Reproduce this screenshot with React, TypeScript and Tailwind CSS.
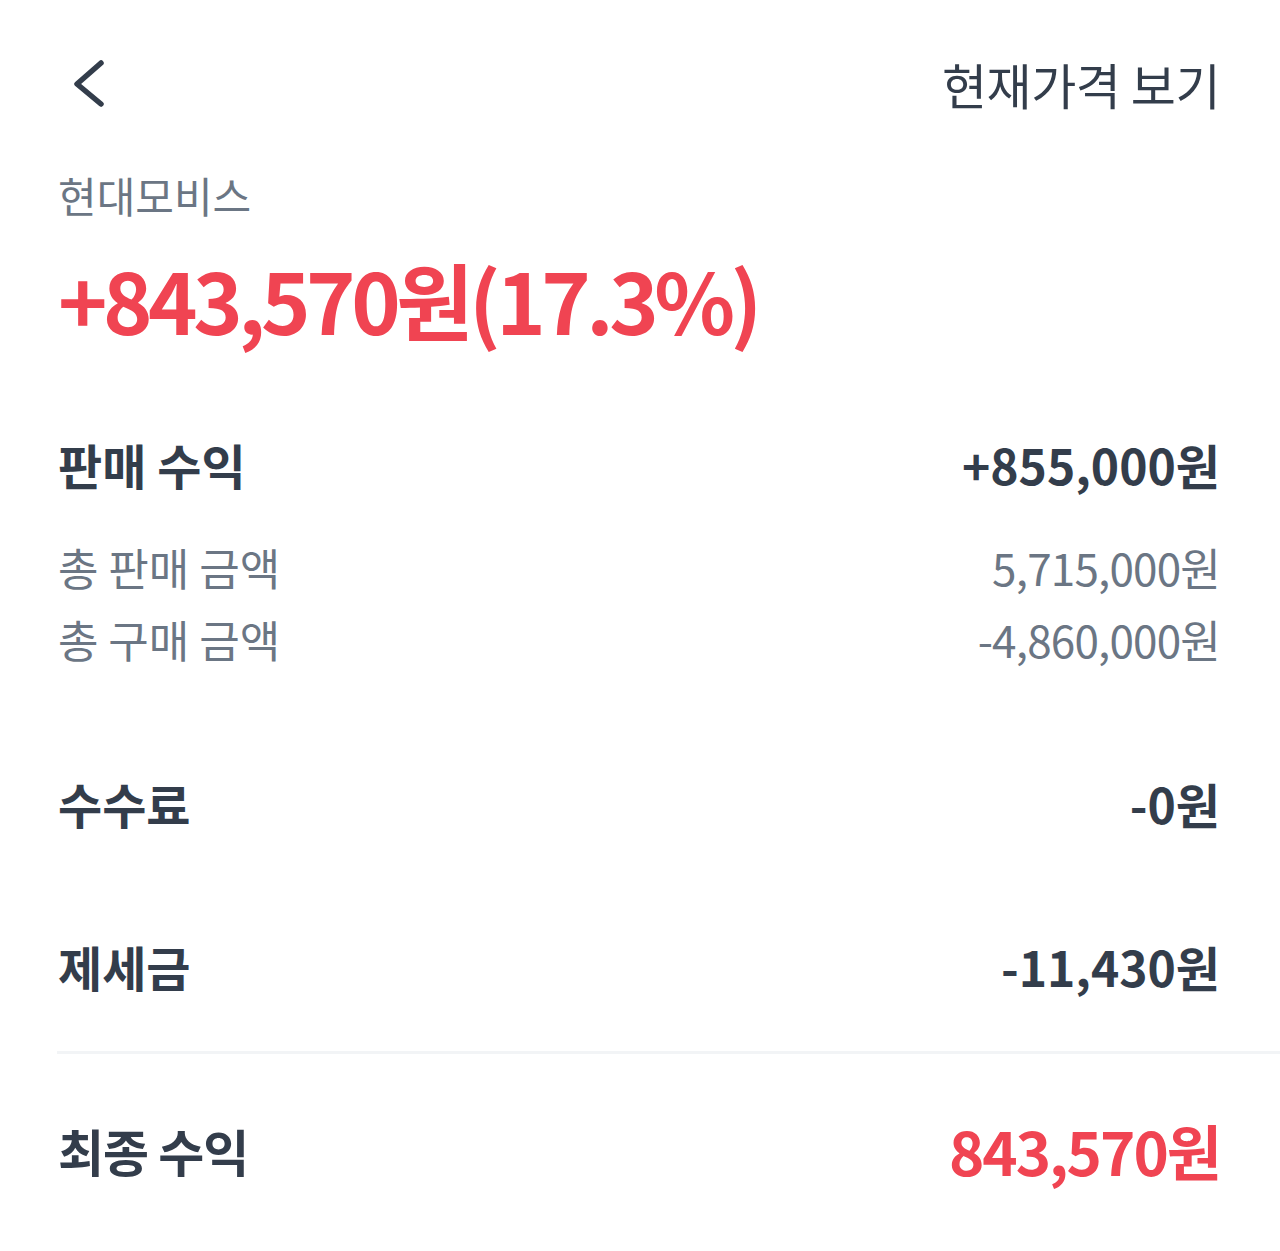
import { type FC } from 'react'

// 판매 내역 상세 화면
interface Line {
  label: string
  value: string
}

const subLines: Line[] = [
  { label: '총 판매 금액', value: '5,715,000원' },
  { label: '총 구매 금액', value: '-4,860,000원' },
]

const font = { fontFamily: '"Noto Sans CJK KR", "Noto Sans", sans-serif' }

const BackIcon: FC = () => (
  <svg width="34" height="52" viewBox="0 0 34 52" fill="none">
    <path
      d="M29 6 L5 27 L29 47"
      stroke="#333d4b"
      strokeWidth="5.5"
      strokeLinecap="round"
      strokeLinejoin="round"
    />
  </svg>
)

export default function App() {
  return (
    <div className="w-[1280px] min-h-[1251px] bg-white text-[#333d4b]" style={font}>
      {/* 상단 바 */}
      <header className="flex items-center justify-between pl-[72px] pr-[60px] pt-[56px] h-[110px]">
        <BackIcon />
        <span className="text-[49px] leading-none tracking-[-0.5px]">현재가격 보기</span>
      </header>

      {/* 종목 요약 */}
      <section className="pl-[58px] pr-[62px] mt-[64px]">
        <div className="text-[42px] leading-none text-[#6b7684]">현대모비스</div>
        <div className="mt-[41px] text-[84px] leading-none font-bold text-[#f04452] tracking-[-4.5px]">
          +843,570원(17.3%)
        </div>
      </section>

      {/* 판매 수익 */}
      <section className="pl-[58px] pr-[60px] mt-[99px]">
        <div className="flex justify-between items-center text-[48px] font-bold leading-none">
          <span>판매 수익</span>
          <span>+855,000원</span>
        </div>
        <div className="mt-[57px] flex flex-col gap-[28px]">
          {subLines.map((line) => (
            <div
              key={line.label}
              className="flex justify-between items-center text-[44px] leading-none text-[#6b7684]"
            >
              <span>{line.label}</span>
              <span className="tracking-[-0.8px]">{line.value}</span>
            </div>
          ))}
        </div>
      </section>

      {/* 수수료 / 제세금 */}
      <section className="pl-[58px] pr-[60px] mt-[118px] flex flex-col gap-[115px]">
        <div className="flex justify-between items-center text-[48px] font-bold leading-none">
          <span>수수료</span>
          <span>-0원</span>
        </div>
        <div className="flex justify-between items-center text-[48px] font-bold leading-none">
          <span>제세금</span>
          <span>-11,430원</span>
        </div>
      </section>

      {/* 구분선 */}
      <div className="ml-[57px] mt-[61px] h-[3px] bg-[#f2f4f6]" />

      {/* 최종 수익 */}
      <section className="pl-[58px] pr-[60px] mt-[66px] flex justify-between items-center font-bold leading-none">
        <span className="text-[50px] tracking-[-1px]">최종 수익</span>
        <span className="text-[60px] text-[#f04452] tracking-[-2px]">843,570원</span>
      </section>
    </div>
  )
}
